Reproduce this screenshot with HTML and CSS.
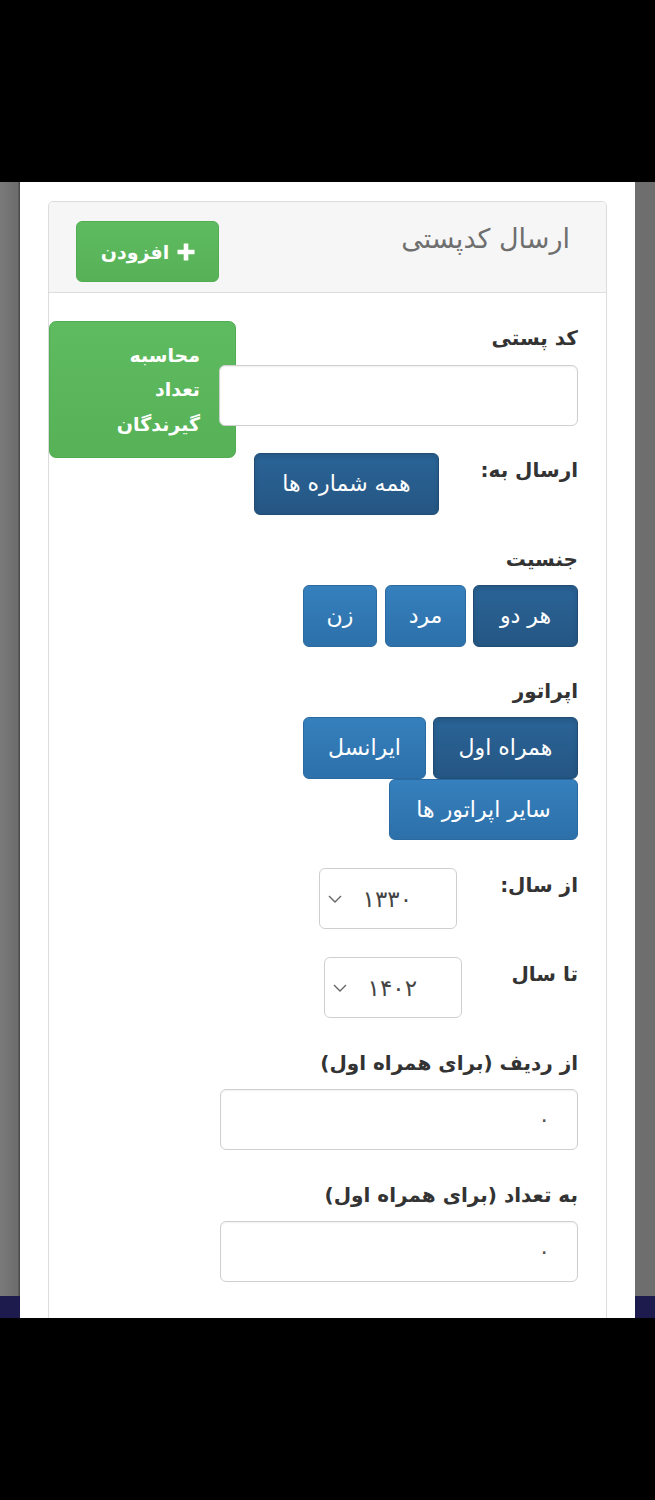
FILE: index.html
```html
<!DOCTYPE html>
<html lang="fa" dir="rtl">
<head>
<meta charset="utf-8">
<title>ارسال کدپستی</title>
<link rel="stylesheet" href="styles.css">
</head>
<body>
<div class="top-bar"></div>
<div class="frame">
  <div class="sheet">
    <div class="card">
      <div class="card-head">
        <h3 class="card-title">ارسال کدپستی</h3>
        <button class="btn btn-success btn-add" type="button">
          <svg class="plus" viewBox="0 0 20 20" width="20" height="20" aria-hidden="true"><path d="M10 1.5v17M1.5 10h17" stroke="#fff" stroke-width="4.6" fill="none"/></svg>
          <span>افزودن</span>
        </button>
      </div>
      <div class="card-body">
        <div class="zip-group">
          <label class="lbl zip-lbl">کد پستی</label>
          <input class="field zip-input" type="text">
          <button class="btn btn-success btn-calc" type="button">محاسبه<br>تعداد<br>گیرندگان</button>
        </div>

        <div class="send-row">
          <label class="lbl send-lbl">ارسال به:</label>
          <button class="btn btn-primary active btn-all" type="button">همه شماره ها</button>
        </div>

        <div class="group group-gender">
          <label class="lbl">جنسیت</label>
          <div class="btn-set">
            <button class="btn btn-primary active w-both" type="button">هر دو</button>
            <button class="btn btn-primary w-man" type="button">مرد</button>
            <button class="btn btn-primary w-woman" type="button">زن</button>
          </div>
        </div>

        <div class="group">
          <label class="lbl">اپراتور</label>
          <div class="btn-set">
            <button class="btn btn-primary active w-mci" type="button">همراه اول</button>
            <button class="btn btn-primary w-irc" type="button">ایرانسل</button>
            <button class="btn btn-primary w-other" type="button">سایر اپراتور ها</button>
          </div>
        </div>

        <div class="year-row">
          <label class="lbl year-from">از سال:</label>
          <div class="select-wrap">
            <select class="select"><option>۱۳۳۰</option></select>
            <svg class="chev" viewBox="0 0 14 8" width="14" height="8" aria-hidden="true"><path d="M1 1l6 6 6-6" stroke="#666" stroke-width="1.4" fill="none"/></svg>
          </div>
        </div>

        <div class="year-row">
          <label class="lbl year-to">تا سال</label>
          <div class="select-wrap">
            <select class="select"><option>۱۴۰۲</option></select>
            <svg class="chev" viewBox="0 0 14 8" width="14" height="8" aria-hidden="true"><path d="M1 1l6 6 6-6" stroke="#666" stroke-width="1.4" fill="none"/></svg>
          </div>
        </div>

        <div class="group">
          <label class="lbl">از ردیف (برای همراه اول)</label>
          <input class="field num" type="text" value="۰">
        </div>

        <div class="group">
          <label class="lbl">به تعداد (برای همراه اول)</label>
          <input class="field num" type="text" value="۰">
        </div>
      </div>
    </div>
  </div>
</div>
</body>
</html>
```

FILE: styles.css
```css
* { box-sizing: border-box; }

html, body {
  margin: 0;
  padding: 0;
  background: #000;
}

body {
  width: 655px;
  height: 1500px;
  font-family: "DejaVu Sans", sans-serif;
  color: #333;
  overflow: hidden;
}

.top-bar {
  height: 182px;
  background: #000;
}

.frame {
  height: 1136px;
  display: flex;
  padding: 0 20px;
  background:
    linear-gradient(to bottom, transparent 1114px, #1d1a4e 1114px),
    linear-gradient(to right, #7a7a7a 0, #6c6c6c 18px, #4a4a4a 19px, #4a4a4a 20px, #6e6e6e 20px, #6e6e6e 100%);
}

.sheet {
  flex: 1;
  background: #fff;
  padding: 19px 28px 0 28px;
  overflow: hidden;
}

.card {
  border: 1px solid #dcdcdc;
  border-radius: 5px;
  height: 1200px;
  background: #fff;
}

.card-head {
  display: flex;
  justify-content: space-between;
  align-items: flex-start;
  height: 91px;
  padding: 19px 36px 0 27px;
  background: #f6f6f6;
  border-bottom: 1px solid #dedede;
  border-radius: 5px 5px 0 0;
}

.card-title {
  margin: 1px 0 0;
  font-size: 27px;
  line-height: 34px;
  font-weight: normal;
  color: #6f6f6f;
}

.btn {
  font-family: inherit;
  font-size: 22px;
  line-height: 30px;
  color: #fff;
  border: 1px solid transparent;
  border-radius: 6px;
  cursor: pointer;
  padding: 0;
  display: inline-flex;
  align-items: center;
  justify-content: center;
}

.btn-success {
  background: linear-gradient(to bottom, #5fbb5f, #57b257);
  border-color: #52ad52;
}

.btn-primary {
  background: linear-gradient(to bottom, #3580bd, #2d70aa);
  border-color: #2b6aa0;
}

.btn-primary.active {
  background: linear-gradient(to bottom, #2a6497, #255683);
  border-color: #214d74;
  box-shadow: inset 0 3px 5px rgba(0, 0, 0, 0.12);
}

.btn-add {
  width: 143px;
  height: 61px;
  gap: 7px;
  font-weight: bold;
  font-size: 19px;
  padding-left: 2px;
}

.plus { flex: none; }

.card-body {
  padding: 28px 28px 0 0;
}

.lbl {
  display: block;
  font-size: 20px;
  line-height: 34px;
  font-weight: bold;
  color: #333;
}

/* postal code block: input lies over the edge of the green button */
.zip-group {
  display: grid;
  grid-template-columns: 342px 17px 170px;
  grid-template-rows: 44px 61px 27px;
}

.zip-lbl {
  grid-column: 1 / 3;
  grid-row: 1;
}

.field {
  font-family: inherit;
  font-size: 20px;
  color: #555;
  background: #fff;
  border: 1px solid #cfcfcf;
  border-radius: 6px;
  height: 61px;
  box-shadow: inset 0 1px 2px rgba(0, 0, 0, 0.06);
}

.zip-input {
  grid-column: 1 / 3;
  grid-row: 2;
  position: relative;
  z-index: 1;
  width: 359px;
}

.btn-calc {
  grid-column: 2 / 4;
  grid-row: 1 / 4;
  align-self: start;
  height: 137px;
  justify-content: flex-start;
  text-align: right;
  padding: 0 35px 0 0;
  font-weight: bold;
  font-size: 19px;
  line-height: 34.5px;
  border-radius: 7px;
}

.send-row {
  display: flex;
  align-items: flex-start;
  margin-bottom: 27px;
}

.send-lbl {
  width: 139px;
}

.btn-all {
  width: 185px;
  height: 62px;
}

.group {
  margin-bottom: 28px;
}

.group-gender {
  margin-bottom: 27px;
}

.group .lbl {
  margin-bottom: 9px;
}

.btn-set {
  display: flex;
  flex-wrap: wrap;
  column-gap: 7px;
  width: 282px;
}

.btn-set .btn { height: 62px; }

.w-both { width: 105px; }
.w-man { width: 81px; margin-left: 1px; }
.w-woman { width: 74px; }
.w-mci { width: 145px; }
.w-irc { width: 123px; }
.w-other { width: 189px; height: 61px !important; }

.year-row {
  display: flex;
  align-items: flex-start;
  margin-bottom: 28px;
}

.year-from { width: 121px; }
.year-to { width: 116px; }

.select-wrap {
  position: relative;
  width: 138px;
  height: 61px;
}

.select {
  appearance: none;
  -webkit-appearance: none;
  width: 100%;
  height: 100%;
  font-family: inherit;
  font-size: 23px;
  color: #444;
  background: #fff;
  border: 1px solid #cfcfcf;
  border-radius: 6px;
  padding: 0 44px 0 0;
  text-align: right;
}

.chev {
  position: absolute;
  left: 9px;
  top: 27px;
  pointer-events: none;
}

.num {
  width: 358px;
  padding: 0 27px 0 0;
  text-align: right;
  font-size: 22px;
}
```
